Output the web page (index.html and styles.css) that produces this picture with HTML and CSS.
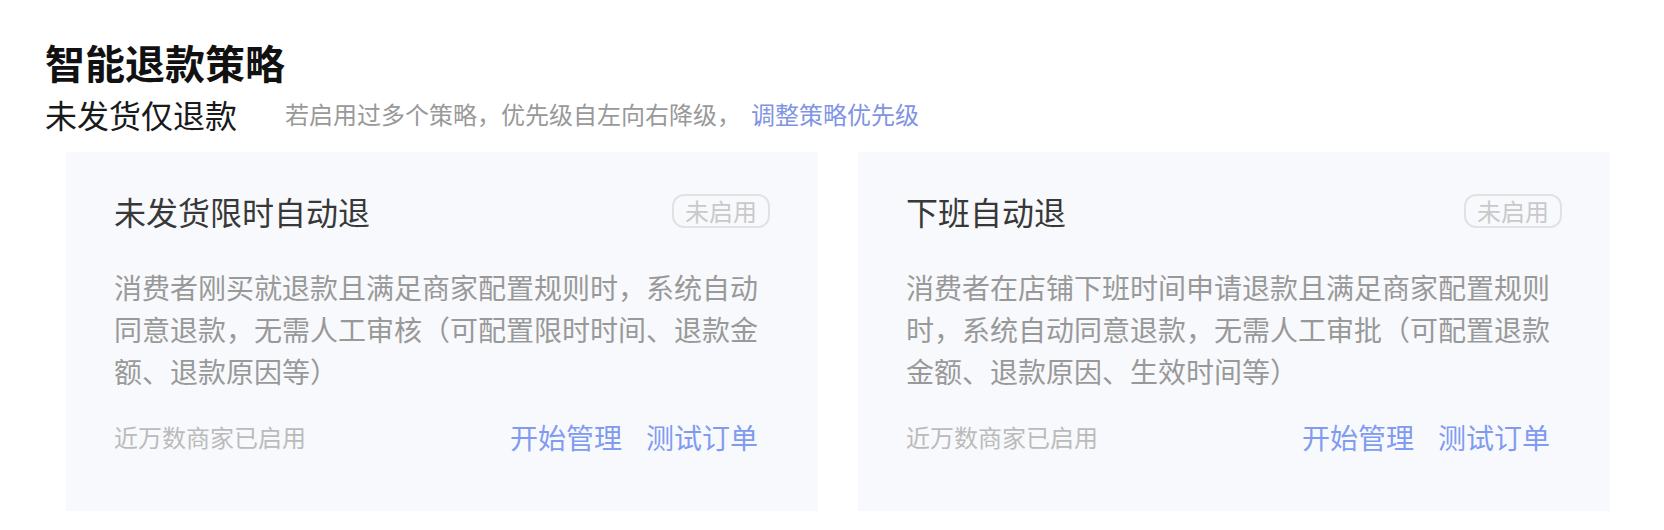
FILE: index.html
```html
<!DOCTYPE html>
<html lang="zh-CN">
<head>
    <meta charset="UTF-8">
    <meta name="viewport" content="width=device-width, initial-scale=1.0">
    <title>智能退款策略</title>
    <link rel="stylesheet" href="styles.css">
</head>
<body>
    <div class="page">
        <h1 class="page-title">智能退款策略</h1>

        <div class="section-head">
            <h2 class="section-title">未发货仅退款</h2>
            <span class="section-tip">若启用过多个策略，优先级自左向右降级，</span>
            <a class="section-link" href="#">调整策略优先级</a>
        </div>

        <div class="strategy-list">
            <div class="strategy-card">
                <div class="card-head">
                    <span class="card-title">未发货限时自动退</span>
                    <span class="status-tag">未启用</span>
                </div>
                <div class="card-body">
                    <p class="card-desc">消费者刚买就退款且满足商家配置规则时，系统自动同意退款，无需人工审核（可配置限时时间、退款金额、退款原因等）</p>
                    <div class="card-foot">
                        <span class="card-usage">近万数商家已启用</span>
                        <div class="card-actions">
                            <a href="#">开始管理</a>
                            <a href="#">测试订单</a>
                        </div>
                    </div>
                </div>
            </div>

            <div class="strategy-card">
                <div class="card-head">
                    <span class="card-title">下班自动退</span>
                    <span class="status-tag">未启用</span>
                </div>
                <div class="card-body">
                    <p class="card-desc">消费者在店铺下班时间申请退款且满足商家配置规则时，系统自动同意退款，无需人工审批（可配置退款金额、退款原因、生效时间等）</p>
                    <div class="card-foot">
                        <span class="card-usage">近万数商家已启用</span>
                        <div class="card-actions">
                            <a href="#">开始管理</a>
                            <a href="#">测试订单</a>
                        </div>
                    </div>
                </div>
            </div>
        </div>
    </div>
</body>
</html>
```

FILE: styles.css
```css
* {
    box-sizing: border-box;
}
body {
    margin: 0;
    background: #fff;
    font-family: "Noto Sans CJK SC", "Noto Sans", sans-serif;
    color: #1a1a1a;
}
a {
    text-decoration: none;
}
.page {
    padding: 36px 45px 0;
}
.page-title {
    margin: 0;
    font-size: 40px;
    line-height: 52px;
    font-weight: 700;
    color: #111;
}
.section-head {
    display: flex;
    align-items: center;
    height: 52px;
    margin-bottom: 12px;
}
.section-title {
    margin: 0;
    font-size: 32px;
    line-height: 42px;
    font-weight: 400;
    color: #1a1a1a;
}
.section-tip {
    margin-left: 48px;
    font-size: 24px;
    line-height: 34px;
    color: #999;
}
.section-link {
    margin-left: 10px;
    font-size: 24px;
    line-height: 34px;
    color: #7f95e3;
}
.strategy-list {
    display: grid;
    grid-template-columns: 752px 752px;
    gap: 40px;
    margin-left: 21px;
}
.strategy-card {
    background: #f8f9fc;
    padding: 35px 48px 53px;
}
.card-head {
    display: flex;
    align-items: center;
    justify-content: space-between;
    height: 48px;
}
.card-title {
    font-size: 32px;
    line-height: 48px;
    color: #383838;
}
.status-tag {
    height: 34px;
    padding: 0 11px;
    border: 2px solid #e2e2e2;
    border-radius: 12px;
    font-size: 24px;
    line-height: 30px;
    color: #c9c9c9;
}
.card-body {
    padding-right: 12px;
}
.card-desc {
    margin: 31px 0 0;
    font-size: 28px;
    line-height: 42px;
    color: #999;
}
.card-foot {
    display: flex;
    align-items: center;
    justify-content: space-between;
    height: 42px;
    margin-top: 24px;
}
.card-usage {
    font-size: 24px;
    line-height: 34px;
    color: #bbb;
}
.card-actions {
    display: flex;
    gap: 24px;
}
.card-actions a {
    font-size: 28px;
    line-height: 42px;
    color: #809bf0;
}
```
